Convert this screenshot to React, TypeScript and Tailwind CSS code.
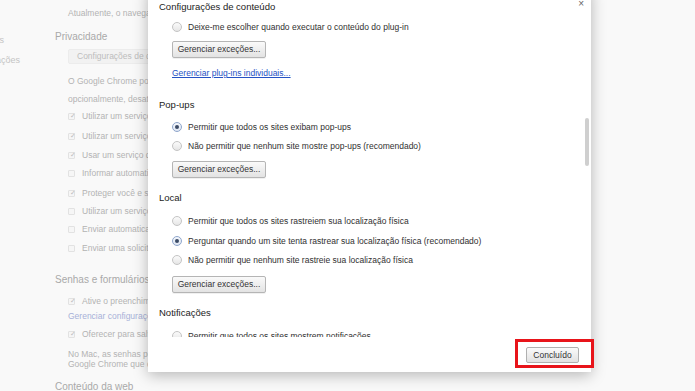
import React from "react";

const Radio = ({ checked }: { checked?: boolean }) => (
  <span
    className={
      "flex h-[10px] w-[10px] shrink-0 items-center justify-center rounded-full border " +
      (checked
        ? "border-[#8fa6cc] bg-gradient-to-b from-[#f4f7fc] to-[#dfe6f2]"
        : "border-[#c4c4c4] bg-gradient-to-b from-[#fbfbfb] to-[#e6e6e6]")
    }
  >
    {checked && <span className="h-[4px] w-[4px] rounded-full bg-[#3b4b66]" />}
  </span>
);

const RadioRow = ({ label, checked, mt }: { label: string; checked?: boolean; mt: string }) => (
  <div className={"flex h-[12px] items-center gap-[6px] pl-[24px] " + mt}>
    <Radio checked={checked} />
    <span className="whitespace-nowrap text-[8.5px] leading-[12px] text-[#303030]">{label}</span>
  </div>
);

const Btn = ({ mt }: { mt: string }) => (
  <div className={"ml-[24px] " + mt}>
    <div className="flex h-[17px] w-[94px] items-center justify-center rounded-[2px] border border-[#b5b5b5] bg-gradient-to-b from-[#fafafa] to-[#e3e3e3] text-[8.5px] text-[#333] shadow-[0_1px_0_rgba(0,0,0,0.06)]">
      Gerenciar exceções...
    </div>
  </div>
);

const Heading = ({ children, mt }: { children: React.ReactNode; mt: string }) => (
  <div className={"h-[12px] pl-[11px] text-[9.5px] leading-[12px] text-[#222] " + mt}>{children}</div>
);

const BgCheck = ({ checked, label, mt }: { checked?: boolean; label: string; mt: string }) => (
  <div className={"flex h-[12px] items-center gap-[7px] pl-[13px] " + mt}>
    <span className="relative flex h-[7px] w-[7px] items-center justify-center rounded-[1px] border border-[#e2e2e2] bg-[#f6f6f6]">
      {checked && <span className="absolute -top-[2px] left-[1px] text-[7px] leading-none text-[#bdbdbd]">✓</span>}
    </span>
    <span className="whitespace-nowrap text-[8.5px] text-[#b3b3b3]">{label}</span>
  </div>
);

export default function App() {
  return (
    <div
      className="relative h-[391px] w-[695px] overflow-hidden bg-[#f9f9f9]"
      style={{ fontFamily: '"Liberation Sans", Arial, sans-serif' }}
    >
      {/* background settings page */}
      <div className="flex">
        <div className="w-[55px] shrink-0 overflow-hidden">
          <div className="ml-[-38px] pt-[30px] text-[9px] leading-[20px] text-[#c4c4c4]">
            <div>Extensões</div>
            <div>Configurações</div>
          </div>
        </div>
        <div className="flex flex-col whitespace-nowrap">
          <div className="mt-[7px] h-[12px] pl-[13px] text-[8.5px] leading-[12px] text-[#b3b3b3]">
            Atualmente, o navegador padrão é o Google Chrome.
          </div>
          <div className="mt-[11px] h-[14px] text-[10px] leading-[14px] text-[#a9a9a9]">Privacidade</div>
          <div className="ml-[13px] mt-[5px] flex h-[15px] w-[200px] items-center rounded-[2px] border border-[#ececec] bg-[#f2f2f2] pl-[8px] text-[8.5px] text-[#bdbdbd]">
            Configurações de conteúdo...
          </div>
          <div className="mt-[8px] pl-[13px] text-[8.5px] leading-[18px] text-[#b3b3b3]">
            <div>O Google Chrome pode usar serviços da web para melhorar</div>
            <div>opcionalmente, desativar esses serviços.</div>
          </div>
          <BgCheck checked label="Utilizar um serviço da web para ajudar" mt="mt-[2px]" />
          <BgCheck checked label="Utilizar um serviço de previsão para" mt="mt-[8px]" />
          <BgCheck checked label="Usar um serviço de previsão para" mt="mt-[7px]" />
          <BgCheck label="Informar automaticamente" mt="mt-[6px]" />
          <BgCheck checked label="Proteger você e seu dispositivo" mt="mt-[8px]" />
          <BgCheck label="Utilizar um serviço da web" mt="mt-[6px]" />
          <BgCheck label="Enviar automaticamente" mt="mt-[6px]" />
          <BgCheck label="Enviar uma solicitação" mt="mt-[7px]" />
          <div className="mt-[19px] h-[14px] text-[10px] leading-[14px] text-[#a9a9a9]">Senhas e formulários</div>
          <BgCheck checked label="Ative o preenchimento automático" mt="mt-[8px]" />
          <div className="mt-[3px] h-[12px] pl-[13px] text-[8.5px] leading-[12px] text-[#a7b1d8]">
            Gerenciar configurações de preenchimento
          </div>
          <BgCheck checked label="Oferecer para salvar suas senhas" mt="mt-[6px]" />
          <div className="mt-[9px] pl-[13px] text-[8.5px] leading-[10px] text-[#b3b3b3]">
            <div>No Mac, as senhas podem ser salvas</div>
            <div>Google Chrome que contém os dados</div>
          </div>
          <div className="mt-[11px] h-[14px] text-[10px] leading-[14px] text-[#a9a9a9]">Conteúdo da web</div>
        </div>
      </div>

      {/* dialog */}
      <div className="absolute left-[148px] top-[-12px] flex h-[384px] w-[443px] flex-col bg-white shadow-[0_3px_14px_rgba(0,0,0,0.28)]">
        <div className="absolute right-[7px] top-[11px] text-[10px] leading-[10px] text-[#666]">×</div>
        <div className="absolute right-[2px] top-[130px] h-[48px] w-[4px] rounded-full bg-[#cfcfcf]" />
        <div className="h-[349px] overflow-hidden">
          <Heading mt="mt-[13px]">Configurações de conteúdo</Heading>
          <RadioRow label="Deixe-me escolher quando executar o conteúdo do plug-in" mt="mt-[8px]" />
          <Btn mt="mt-[8px]" />
          <div className="mt-[9px] h-[12px] pl-[24px] text-[8.5px] leading-[12px] text-[#2552c4] underline">
            Gerenciar plug-ins individuais...
          </div>
          <Heading mt="mt-[20px]">Pop-ups</Heading>
          <RadioRow checked label="Permitir que todos os sites exibam pop-ups" mt="mt-[10px]" />
          <RadioRow label="Não permitir que nenhum site mostre pop-ups (recomendado)" mt="mt-[7px]" />
          <Btn mt="mt-[9px]" />
          <Heading mt="mt-[14px]">Local</Heading>
          <RadioRow label="Permitir que todos os sites rastreiem sua localização física" mt="mt-[11px]" />
          <RadioRow checked label="Perguntar quando um site tenta rastrear sua localização física (recomendado)" mt="mt-[8px]" />
          <RadioRow label="Não permitir que nenhum site rastreie sua localização física" mt="mt-[7px]" />
          <Btn mt="mt-[10px]" />
          <Heading mt="mt-[14px]">Notificações</Heading>
          <RadioRow label="Permitir que todos os sites mostrem notificações" mt="mt-[11px]" />
        </div>
        <div className="flex justify-end pr-[12px] pt-[10px]">
          <div className="flex h-[16px] w-[53px] items-center justify-center rounded-[2px] border border-[#b0b0b0] bg-gradient-to-b from-[#fafafa] to-[#e2e2e2] text-[8.5px] text-[#333]">
            Concluído
          </div>
        </div>
      </div>

      {/* red annotation box */}
      <div className="absolute left-[515px] top-[339px] h-[29px] w-[79px] border-[3px] border-[#e8141a]" />
    </div>
  );
}
